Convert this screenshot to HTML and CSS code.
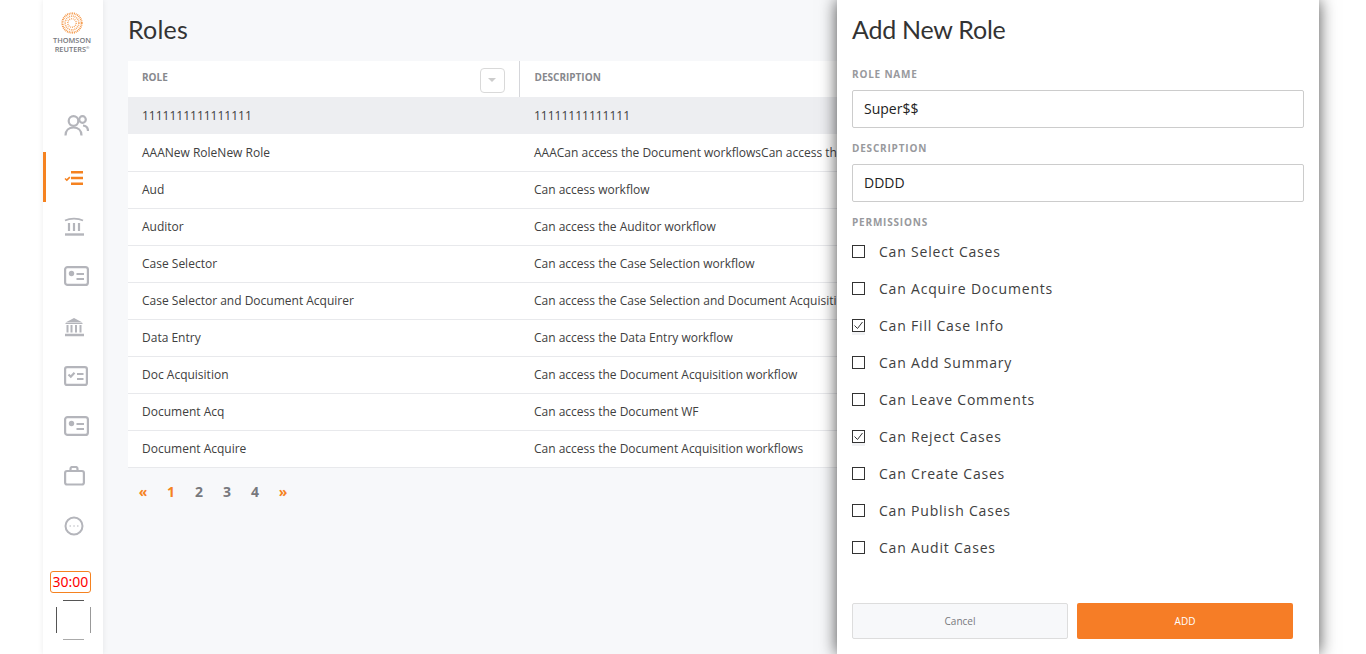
FILE: index.html

```html
<!DOCTYPE html>
<html lang="en">
<head>
    <meta charset="UTF-8">
    <title>Roles</title>
    <link rel="stylesheet" href="styles.css">
</head>
<body>

<div class="app">
    <aside class="sidebar">
        <div class="logo">
            <svg class="logo-mark" viewBox="0 0 24 24" width="22" height="22">
                <circle cx="12" cy="12" r="10.500" fill="none" stroke="#f4913c" stroke-width="2.200" stroke-dasharray="1 .9"/>
                <circle cx="12" cy="12" r="7.500" fill="none" stroke="#f5a35c" stroke-width="1.800" stroke-dasharray="1 1"/>
                <circle cx="12" cy="12" r="4.600" fill="none" stroke="#f5a35c" stroke-width="1.600" stroke-dasharray="1 1"/>
            </svg>
            <div class="logo-text">THOMSON<br>REUTERS<sup>®</sup></div>
        </div>
        <nav class="nav">
            <a class="nav-item">
                <svg viewBox="0 0 25 22" width="25" height="22" fill="none" stroke="#b4b5bb" stroke-width="2.200">
                    <circle cx="9.500" cy="6" r="4.800"/>
                    <path d="M1.500 20.500c0-5 3.500-8 8-8s8 3 8 8"/>
                    <circle cx="18.500" cy="4.500" r="3.300"/>
                    <path d="M19 10.500c3 .3 5 2.500 5 5.500"/>
                </svg>
            </a>
            <a class="nav-item active">
                <svg class="nudge" viewBox="0 0 20 14" width="20" height="14">
                    <path d="M1 7.500l1.800 1.600 3-3" fill="none" stroke="#f58220" stroke-width="1.500"/>
                    <path d="M7 1.200h12M7 7h12M7 12.800h12" stroke="#f58220" stroke-width="2.500"/>
                </svg>
            </a>
            <a class="nav-item">
                <svg viewBox="0 0 20 20" width="20" height="20" fill="none" stroke="#b4b5bb">
                    <path d="M1 4.500C6 2 14 2 19 4.500" stroke-width="1.800"/>
                    <path d="M5 7v8M10 7v8M15 7v8" stroke-width="2.200"/>
                    <path d="M1 18.500h19" stroke-width="2.400"/>
                </svg>
            </a>
            <a class="nav-item">
                <svg viewBox="0 0 25 20" width="25" height="20" fill="none" stroke="#b4b5bb" stroke-width="2.200">
                    <rect x="1.100" y="1.100" width="22.800" height="17.800" rx="2.500"/>
                    <circle cx="7.500" cy="7.500" r="2.700" fill="#b4b5bb" stroke="none"/>
                    <path d="M12.500 8h7.500M12.500 13h7.500"/>
                </svg>
            </a>
            <a class="nav-item">
                <svg class="nudge" viewBox="0 0 20 20" width="20" height="20" fill="none" stroke="#b4b5bb">
                    <path d="M10 1L1.500 5.500h17z" fill="#b4b5bb" stroke="none"/>
                    <path d="M1.500 6.500h17" stroke-width="1"/>
                    <path d="M3.500 8v7.500M7.500 8v7.500M12 8v7.500M16.500 8v7.500" stroke-width="2"/>
                    <path d="M1 18h19" stroke-width="2.500"/>
                </svg>
            </a>
            <a class="nav-item">
                <svg viewBox="0 0 24 20" width="24" height="20" fill="none" stroke="#b4b5bb" stroke-width="2.200">
                    <rect x="1.100" y="1.100" width="21.800" height="17.800" rx="2"/>
                    <path d="M4.500 8.500l2.300 2.200 3.700-4"/>
                    <path d="M13 8h6.500M13 13h6.500"/>
                </svg>
            </a>
            <a class="nav-item">
                <svg viewBox="0 0 25 20" width="25" height="20" fill="none" stroke="#b4b5bb" stroke-width="2.200">
                    <rect x="1.100" y="1.100" width="22.800" height="17.800" rx="2.500"/>
                    <circle cx="7.500" cy="7.500" r="2.700" fill="#b4b5bb" stroke="none"/>
                    <path d="M12.500 8h7.500M12.500 13h7.500"/>
                </svg>
            </a>
            <a class="nav-item">
                <svg viewBox="0 0 21 20" width="21" height="20" fill="none" stroke="#b4b5bb" stroke-width="2.200">
                    <rect x="1.100" y="5" width="18.800" height="13.500" rx="2"/>
                    <path d="M6.500 5V2.800C6.500 1.800 7.300 1 8.300 1h3.400c1 0 1.800.8 1.800 1.800V5"/>
                </svg>
            </a>
            <a class="nav-item">
                <svg viewBox="0 0 20 20" width="20" height="20" fill="none" stroke="#b4b5bb">
                    <circle cx="10" cy="10" r="8.500" stroke-width="2"/>
                    <path d="M5.500 10h1.500M9.300 10h1.500M13 10h1.500" stroke-width="1.200"/>
                </svg>
            </a>
        </nav>
        <div class="timer">30:00</div>
        <div class="avatar"></div>
    </aside>

    <main class="content">
        <h1 class="page-title">Roles</h1>
        <table class="roles">
            <thead>
                <tr>
                    <th class="col-role">
                        <div class="th-inner">
                            <span>ROLE</span>
                            <span class="sort-btn"><span class="caret"></span></span>
                        </div>
                    </th>
                    <th>DESCRIPTION</th>
                </tr>
            </thead>
            <tbody>
                <tr class="selected"><td>1111111111111111</td><td>11111111111111</td></tr>
                <tr><td>AAANew RoleNew Role</td><td>AAACan access the Document workflowsCan access th</td></tr>
                <tr><td>Aud</td><td>Can access workflow</td></tr>
                <tr><td>Auditor</td><td>Can access the Auditor workflow</td></tr>
                <tr><td>Case Selector</td><td>Can access the Case Selection workflow</td></tr>
                <tr><td>Case Selector and Document Acquirer</td><td>Can access the Case Selection and Document Acquisiti</td></tr>
                <tr><td>Data Entry</td><td>Can access the Data Entry workflow</td></tr>
                <tr><td>Doc Acquisition</td><td>Can access the Document Acquisition workflow</td></tr>
                <tr><td>Document Acq</td><td>Can access the Document WF</td></tr>
                <tr><td>Document Acquire</td><td>Can access the Document Acquisition workflows</td></tr>
            </tbody>
        </table>
        <div class="pager">
            <a class="on">«</a>
            <a class="on">1</a>
            <a>2</a>
            <a>3</a>
            <a>4</a>
            <a class="on">»</a>
        </div>
    </main>

    <section class="drawer">
        <h2 class="drawer-title">Add New Role</h2>
        <label class="field-label">ROLE NAME</label>
        <input class="field" type="text" value="Super$$">
        <label class="field-label">DESCRIPTION</label>
        <input class="field" type="text" value="DDDD">
        <label class="field-label">PERMISSIONS</label>
        <ul class="perms">
            <li><span class="check"></span>Can Select Cases</li>
            <li><span class="check"></span>Can Acquire Documents</li>
            <li><span class="check checked"><svg viewBox="0 0 13 13" width="13" height="13"><path d="M2.500 6.500l3 3 5-6.500" fill="none" stroke="#333" stroke-width="1"/></svg></span>Can Fill Case Info</li>
            <li><span class="check"></span>Can Add Summary</li>
            <li><span class="check"></span>Can Leave Comments</li>
            <li><span class="check checked"><svg viewBox="0 0 13 13" width="13" height="13"><path d="M2.500 6.500l3 3 5-6.500" fill="none" stroke="#333" stroke-width="1"/></svg></span>Can Reject Cases</li>
            <li><span class="check"></span>Can Create Cases</li>
            <li><span class="check"></span>Can Publish Cases</li>
            <li><span class="check"></span>Can Audit Cases</li>
        </ul>
        <div class="drawer-actions">
            <button class="btn btn-cancel">Cancel</button>
            <button class="btn btn-add">ADD</button>
        </div>
    </section>
</div>

</body>
</html>
```

FILE: styles.css

```css
* {
    box-sizing: border-box;
}
html, body {
    height: 100%;
}
body {
    margin: 0;
    background: #fff;
    font-family: "Open Sans", Arial, sans-serif;
    color: #404040;
    overflow: hidden;
}
.app {
    display: flex;
    height: 654px;
    margin-left: 43px;
}

/* sidebar */
.sidebar {
    width: 60px;
    flex: none;
    background: #fff;
    box-shadow: 0 0 6px rgba(0,0,0,0.08);
    display: flex;
    flex-direction: column;
    align-items: center;
    z-index: 1;
}
.logo {
    height: 102px;
    margin-left: -2px;
    padding-top: 12px;
    text-align: center;
}
.logo-mark {
    display: block;
    margin: 0 auto 2px;
}
.logo-text {
    font-size: 7.400px;
    line-height: 8.500px;
    font-weight: 600;
    color: #77787d;
}
.logo-text sup {
    font-size: 4px;
    line-height: 0;
}
.nav {
    width: 100%;
    height: 450px;
}
.nav-item {
    display: flex;
    align-items: center;
    height: 50px;
    padding: 0 0 2px 18px;
    border-left: 3px solid transparent;
}
.nav-item.active {
    padding-bottom: 0;
    border-left-color: #f58220;
}
.nudge {
    margin-top: 2px;
}
.timer {
    width: 41px;
    height: 22px;
    margin: 19px 0 7px -5px;
    border: 1px solid #f58220;
    border-radius: 3px;
    color: #f00;
    font-family: "Noto Sans", Arial, sans-serif;
    font-size: 14px;
    line-height: 20px;
    text-align: center;
}
.avatar {
    width: 35px;
    height: 40px;
    background:
        linear-gradient(#555, #555) 50% 0 / 21px 1px no-repeat,
        linear-gradient(#aaa, #aaa) 50% 100% / 21px 1px no-repeat,
        linear-gradient(#555, #555) 0 50% / 1px 26px no-repeat,
        linear-gradient(#999, #999) 100% 50% / 1px 26px no-repeat;
}

/* list */
.content {
    width: 734px;
    flex: none;
    padding-left: 25px;
    background: #f7f8fa;
    overflow: hidden;
}
.page-title {
    margin: 0;
    height: 61px;
    padding-top: 12px;
    font-family: Lato, "Open Sans", sans-serif;
    font-size: 25px;
    line-height: 34px;
    font-weight: 400;
    letter-spacing: 0.2px;
    color: #333;
}
.roles {
    width: 709px;
    border-collapse: collapse;
    table-layout: fixed;
    background: #fff;
    font-size: 12px;
}
.roles th {
    height: 36px;
    padding: 0 14px 4px;
    text-align: left;
    font-size: 10px;
    font-weight: 700;
    color: #87888d;
}
.roles th.col-role {
    width: 391px;
    border-right: 1px solid #d5d6da;
}
.roles th + th,
.roles td + td {
    padding-left: 15px;
}
.th-inner {
    display: flex;
    align-items: center;
    justify-content: space-between;
    height: 14px;
}
.sort-btn {
    display: flex;
    align-items: center;
    justify-content: center;
    width: 25px;
    height: 25px;
    border: 1px solid #d9d9d9;
    border-radius: 4px;
    transform: translateY(3px);
}
.caret {
    border-left: 4px solid transparent;
    border-right: 4px solid transparent;
    border-top: 4px solid #ccc;
}
.roles td {
    height: 37px;
    padding: 0 0 0 14px;
    border-bottom: 1px solid #e8e9ec;
    white-space: nowrap;
    overflow: hidden;
}
.roles tr.selected td {
    background: #edeef1;
    border-bottom: 0;
}
.pager {
    display: flex;
    height: 48px;
    align-items: center;
    padding-left: 1px;
    font-size: 14px;
    font-weight: 700;
    color: #77787d;
}
.pager a {
    width: 28px;
    text-align: center;
}
.pager a.on {
    color: #f58220;
}

/* drawer */
.drawer {
    width: 482px;
    flex: none;
    height: 654px;
    padding: 0 15px;
    background: #fff;
    box-shadow: 0 0 16px rgba(0,0,0,0.7);
    z-index: 2;
}
.drawer-title {
    margin: 0;
    height: 67px;
    padding-top: 12px;
    font-family: Lato, "Open Sans", sans-serif;
    font-size: 25px;
    line-height: 34px;
    font-weight: 400;
    letter-spacing: -0.25px;
    color: #333;
}
.field-label {
    display: block;
    height: 23px;
    font-size: 10px;
    line-height: 15px;
    font-weight: 700;
    letter-spacing: 0.8px;
    color: #98999d;
}
.field {
    display: block;
    width: 452px;
    height: 38px;
    margin-bottom: 13px;
    padding: 0 11px 2px;
    border: 1px solid #ccc;
    border-radius: 2px;
    font-family: "Open Sans", Arial, sans-serif;
    font-size: 14px;
    color: #222;
}
.perms {
    list-style: none;
    margin: -5px 0 0;
    padding: 0;
}
.perms li {
    display: flex;
    align-items: center;
    height: 37px;
    font-size: 14px;
    letter-spacing: 0.8px;
    color: #404040;
}
.check {
    width: 13px;
    height: 13px;
    flex: none;
    margin-right: 14px;
    border: 1px solid #333;
    position: relative;
}
.check.checked {
    box-shadow: 0 3px 0 #f1f2f4;
}
.check svg {
    position: absolute;
    top: -1px;
    left: -1px;
}
.drawer-actions {
    display: flex;
    gap: 9px;
    margin-top: 37px;
}
.btn {
    width: 216px;
    height: 36px;
    border-radius: 2px;
    font-family: "Open Sans", Arial, sans-serif;
    font-size: 10px;
}
.btn-cancel {
    background: #f7f8fa;
    border: 1px solid #ddd;
    color: #77787d;
}
.btn-add {
    background: #f67d26;
    border: 0;
    color: #fff;
}
```
